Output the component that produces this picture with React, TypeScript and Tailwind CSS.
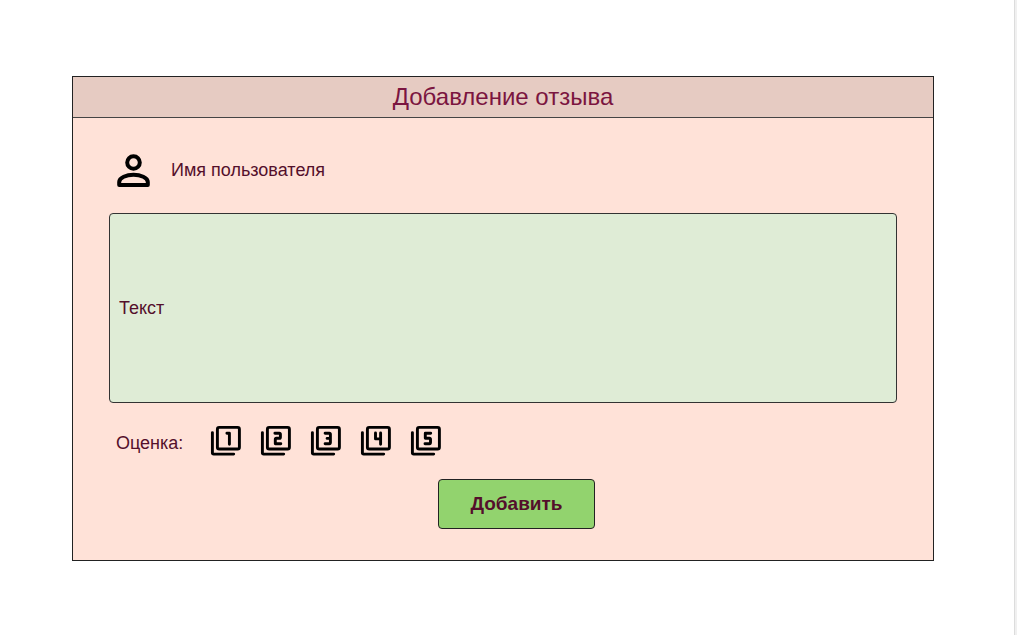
import { useState } from "react";

const digits: { value: number; path: string }[] = [
  { value: 1, path: "M16.9 8.2H19.4V19.2" },
  { value: 2, path: "M14.9 8.2H19.3Q20.4 8.2 20.4 9.3V12.2Q20.4 13.3 19.3 13.3H16.4Q15.3 13.3 15.3 14.4V18.7H20.8" },
  { value: 3, path: "M15.1 8.2H19.3Q20.4 8.2 20.4 9.3V17.6Q20.4 18.7 19.3 18.7H15.1M17.1 13.4H20" },
  { value: 4, path: "M15.5 8V13.9H20.6M20.6 8V19.2" },
  { value: 5, path: "M20.7 8.2H15.3V13.2H19.4Q20.5 13.2 20.5 14.3V17.6Q20.5 18.7 19.4 18.7H15" },
];

function UserIcon() {
  return (
    <svg viewBox="0 0 34 34" className="h-[34px] w-[34px] shrink-0" fill="none" stroke="#000" strokeWidth="4" aria-hidden="true">
      <circle cx="16.5" cy="8.5" r="6.3" />
      <path strokeLinejoin="round" d="M2.2 31V28C2.2 23.5 9.5 20.8 16.5 20.8S30.8 23.5 30.8 28V31Z" />
    </svg>
  );
}

function RatingIcon({ path }: { path: string }) {
  return (
    <svg viewBox="0 0 32 32" className="h-8 w-8" fill="none" stroke="#000" strokeWidth="2.9" aria-hidden="true">
      <rect x="7.4" y="2.4" width="22" height="21.6" rx="1.8" />
      <path strokeLinecap="round" d="M2.4 7.6V27.8Q2.4 29.1 3.7 29.1H23.7" />
      <path strokeLinecap="round" strokeLinejoin="round" d={path} />
    </svg>
  );
}

export default function App() {
  const [rating, setRating] = useState(0);

  return (
    <div className="flex min-h-screen bg-white font-['Liberation_Sans',Arial,sans-serif] text-[#540f2b]">
      <main className="min-w-0 flex-1 pt-[76px] pr-20 pb-[74px] pl-[72px]">
        <form className="border border-[#222] bg-[#ffe2d8]" onSubmit={(e) => e.preventDefault()}>
          <h1 className="border-b border-[#444] bg-[#e6cbc2] text-center text-2xl leading-10 text-[#7b1540]">
            Добавление отзыва
          </h1>
          <div className="px-9 pt-9 pb-[31px]">
            <label className="flex items-start gap-5 pl-2">
              <UserIcon />
              <input
                type="text"
                aria-label="Имя пользователя"
                placeholder="Имя пользователя"
                className="h-8 min-w-0 flex-1 bg-transparent text-lg outline-none placeholder:text-[#540f2b]"
              />
            </label>
            <input
              type="text"
              aria-label="Текст"
              placeholder="Текст"
              className="mt-[25px] block h-[190px] w-full rounded-sm border border-[#333] bg-[#dfecd6] px-[9px] text-lg outline-none placeholder:text-[#540f2b]"
            />
            <div className="mt-[22px] flex items-center pl-[7px]">
              <span id="rating-label" className="pt-1 text-lg leading-7">Оценка:</span>
              <div role="group" aria-labelledby="rating-label" className="ml-[27px] flex gap-[18px]">
                {digits.map(({ value, path }) => (
                  <button
                    key={value}
                    type="button"
                    aria-label={`Оценка ${value}`}
                    aria-pressed={rating === value}
                    onClick={() => setRating(value)}
                    className="cursor-pointer"
                  >
                    <RatingIcon path={path} />
                  </button>
                ))}
              </div>
            </div>
            <div className="mt-[22px] flex justify-center pl-[27px]">
              <button
                type="submit"
                className="h-[50px] w-[157px] cursor-pointer rounded-sm border border-[#222] bg-[#92d36e] text-[19px] font-bold"
              >
                Добавить
              </button>
            </div>
          </div>
        </form>
      </main>
      <div className="w-[3px] border-l border-[#dcdcdc] bg-[#f0f0f0]" />
    </div>
  );
}
